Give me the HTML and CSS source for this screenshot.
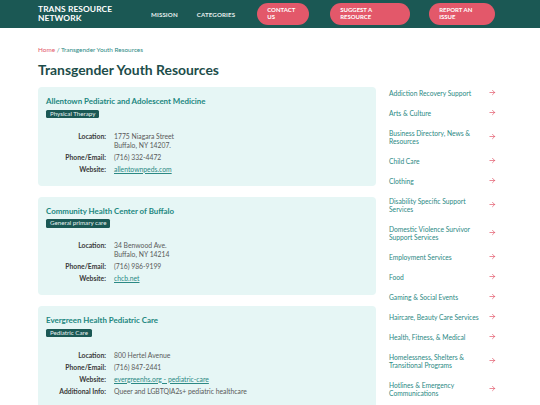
FILE: index.html
```html
<!DOCTYPE html>
<html lang="en">
<head>
<meta charset="utf-8">
<title>Transgender Youth Resources</title>
<link rel="stylesheet" href="styles.css">
</head>
<body>
<header class="site-header">
  <div class="logo">TRANS RESOURCE<br>NETWORK</div>
  <nav class="nav">
    <a class="nav-link nav-mission" href="#">MISSION</a>
    <a class="nav-link nav-categories" href="#">CATEGORIES</a>
    <a class="btn btn-contact" href="#">CONTACT US</a>
    <a class="btn btn-suggest" href="#">SUGGEST A RESOURCE</a>
    <a class="btn btn-report" href="#">REPORT AN ISSUE</a>
  </nav>
</header>

<div class="page">
  <div class="breadcrumb"><a href="#" class="crumb-home">Home</a> / Transgender Youth Resources</div>
  <h1 class="page-title">Transgender Youth Resources</h1>

  <div class="layout">
    <main class="cards">
      <article class="card">
        <h2 class="card-title">Allentown Pediatric and Adolescent Medicine</h2>
        <span class="tag">Physical Therapy</span>
        <dl class="details">
          <dt>Location:</dt><dd>1775 Niagara Street<br>Buffalo, NY 14207.</dd>
          <dt>Phone/Email:</dt><dd>(716) 332-4472</dd>
          <dt>Website:</dt><dd><a href="#">allentownpeds.com</a></dd>
        </dl>
      </article>
      <article class="card">
        <h2 class="card-title">Community Health Center of Buffalo</h2>
        <span class="tag">General primary care</span>
        <dl class="details">
          <dt>Location:</dt><dd>34 Benwood Ave.<br>Buffalo, NY 14214</dd>
          <dt>Phone/Email:</dt><dd>(716) 986-9199</dd>
          <dt>Website:</dt><dd><a href="#">chcb.net</a></dd>
        </dl>
      </article>
      <article class="card">
        <h2 class="card-title">Evergreen Health Pediatric Care</h2>
        <span class="tag">Pediatric Care</span>
        <dl class="details">
          <dt>Location:</dt><dd>800 Hertel Avenue</dd>
          <dt>Phone/Email:</dt><dd>(716) 847-2441</dd>
          <dt>Website:</dt><dd><a href="#">evergreenhs.org - pediatric-care</a></dd>
          <dt>Additional Info:</dt><dd>Queer and LGBTQIA2s+ pediatric healthcare</dd>
        </dl>
      </article>
    </main>

    <aside class="sidebar">
      <ul class="cat-list">
        <li><a href="#"><span>Addiction Recovery Support</span><svg class="arrow" viewBox="0 0 8 8"><path d="M1 4h5.5M4 1.5L6.5 4 4 6.5"/></svg></a></li>
        <li><a href="#"><span>Arts &amp; Culture</span><svg class="arrow" viewBox="0 0 8 8"><path d="M1 4h5.5M4 1.5L6.5 4 4 6.5"/></svg></a></li>
        <li><a href="#"><span>Business Directory, News &amp; Resources</span><svg class="arrow" viewBox="0 0 8 8"><path d="M1 4h5.5M4 1.5L6.5 4 4 6.5"/></svg></a></li>
        <li><a href="#"><span>Child Care</span><svg class="arrow" viewBox="0 0 8 8"><path d="M1 4h5.5M4 1.5L6.5 4 4 6.5"/></svg></a></li>
        <li><a href="#"><span>Clothing</span><svg class="arrow" viewBox="0 0 8 8"><path d="M1 4h5.5M4 1.5L6.5 4 4 6.5"/></svg></a></li>
        <li><a href="#"><span>Disability Specific Support Services</span><svg class="arrow" viewBox="0 0 8 8"><path d="M1 4h5.5M4 1.5L6.5 4 4 6.5"/></svg></a></li>
        <li><a href="#"><span>Domestic Violence Survivor Support Services</span><svg class="arrow" viewBox="0 0 8 8"><path d="M1 4h5.5M4 1.5L6.5 4 4 6.5"/></svg></a></li>
        <li><a href="#"><span>Employment Services</span><svg class="arrow" viewBox="0 0 8 8"><path d="M1 4h5.5M4 1.5L6.5 4 4 6.5"/></svg></a></li>
        <li><a href="#"><span>Food</span><svg class="arrow" viewBox="0 0 8 8"><path d="M1 4h5.5M4 1.5L6.5 4 4 6.5"/></svg></a></li>
        <li><a href="#"><span>Gaming &amp; Social Events</span><svg class="arrow" viewBox="0 0 8 8"><path d="M1 4h5.5M4 1.5L6.5 4 4 6.5"/></svg></a></li>
        <li><a href="#"><span>Haircare, Beauty Care Services</span><svg class="arrow" viewBox="0 0 8 8"><path d="M1 4h5.5M4 1.5L6.5 4 4 6.5"/></svg></a></li>
        <li><a href="#"><span>Health, Fitness, &amp; Medical</span><svg class="arrow" viewBox="0 0 8 8"><path d="M1 4h5.5M4 1.5L6.5 4 4 6.5"/></svg></a></li>
        <li><a href="#"><span>Homelessness, Shelters &amp; Transitional Programs</span><svg class="arrow" viewBox="0 0 8 8"><path d="M1 4h5.5M4 1.5L6.5 4 4 6.5"/></svg></a></li>
        <li><a href="#"><span>Hotlines &amp; Emergency Communications</span><svg class="arrow" viewBox="0 0 8 8"><path d="M1 4h5.5M4 1.5L6.5 4 4 6.5"/></svg></a></li>
      </ul>
    </aside>
  </div>
</div>
</body>
</html>
```

FILE: styles.css
```css
* { box-sizing: border-box; }
html, body { margin: 0; padding: 0; }
body {
  font-family: Lato, "Open Sans", "Liberation Sans", sans-serif;
  background: #ffffff;
  color: #3a3a3a;
  width: 540px;
  overflow: hidden;
}
a { text-decoration: none; color: inherit; }

.site-header {
  height: 28px;
  background: #1b5854;
  display: flex;
  align-items: center;
  padding-left: 38px;
}
.logo {
  width: 113px;
  color: #ffffff;
  font-weight: 700;
  font-size: 8.4px;
  line-height: 9.5px;
  letter-spacing: 0.1px;
}
.nav {
  display: flex;
  align-items: center;
}
.nav-link {
  color: #e6efee;
  font-size: 6.2px;
  font-weight: 700;
  letter-spacing: 0.1px;
}
.nav-categories { margin-left: 19px; }
.btn {
  display: flex;
  align-items: center;
  height: 22px;
  border-radius: 11px;
  background: #e3586a;
  color: #ffffff;
  font-size: 6px;
  font-weight: 700;
  line-height: 6.6px;
  padding: 0 10px;
}
.btn-contact { width: 52px; margin-left: 22px; }
.btn-suggest { width: 80px; margin-left: 21px; padding-right: 30px; }
.btn-report { width: 66px; margin-left: 19px; padding-right: 20px; }

.page {
  padding: 0 44px 0 38px;
}
.breadcrumb {
  margin-top: 18px;
  font-size: 6.4px;
  line-height: 8px;
  color: #2b8984;
}
.crumb-home { color: #e3586a; }
.page-title {
  margin: 7px 0 8px;
  font-size: 13.9px;
  line-height: 18px;
  font-weight: 700;
  color: #1d4d4a;
}

.layout {
  display: grid;
  grid-template-columns: 338px 1fr;
  column-gap: 13px;
  align-items: start;
}
.cards {
  display: flex;
  flex-direction: column;
  gap: 11px;
}
.card {
  background: #e6f6f5;
  border-radius: 4px;
  padding: 9px 8px 12px;
  display: flex;
  flex-direction: column;
  align-items: flex-start;
}
.card-title {
  margin: 0;
  font-size: 7.9px;
  line-height: 10px;
  font-weight: 700;
  color: #21877f;
}
.tag {
  display: block;
  margin-top: 3.5px;
  background: #1b5854;
  color: #e8f3f2;
  font-size: 6.2px;
  line-height: 8.5px;
  padding: 0 4px;
  border-radius: 1.5px;
}
.details {
  display: grid;
  grid-template-columns: 60px 1fr;
  column-gap: 8px;
  row-gap: 3px;
  width: 100%;
  margin: 13.5px 0 0;
  font-size: 6.8px;
  line-height: 9px;
}
.details dt {
  text-align: right;
  font-weight: 700;
  color: #3a3a3a;
}
.details dd {
  margin: 0;
  color: #5a5a5a;
}
.details dd a {
  color: #2b8984;
  text-decoration: underline;
}

.sidebar { margin-top: -4.5px; }
.cat-list {
  list-style: none;
  margin: 0;
  padding: 0;
}
.cat-list a {
  display: flex;
  align-items: center;
  justify-content: space-between;
  padding: 6px 0;
  color: #2b8984;
  font-size: 6.7px;
  line-height: 8px;
}
.cat-list span { width: 98px; }
.arrow {
  width: 7px;
  height: 7px;
  fill: none;
  stroke: #e3586a;
  stroke-width: 0.8;
  stroke-linecap: round;
  stroke-linejoin: round;
}
```
